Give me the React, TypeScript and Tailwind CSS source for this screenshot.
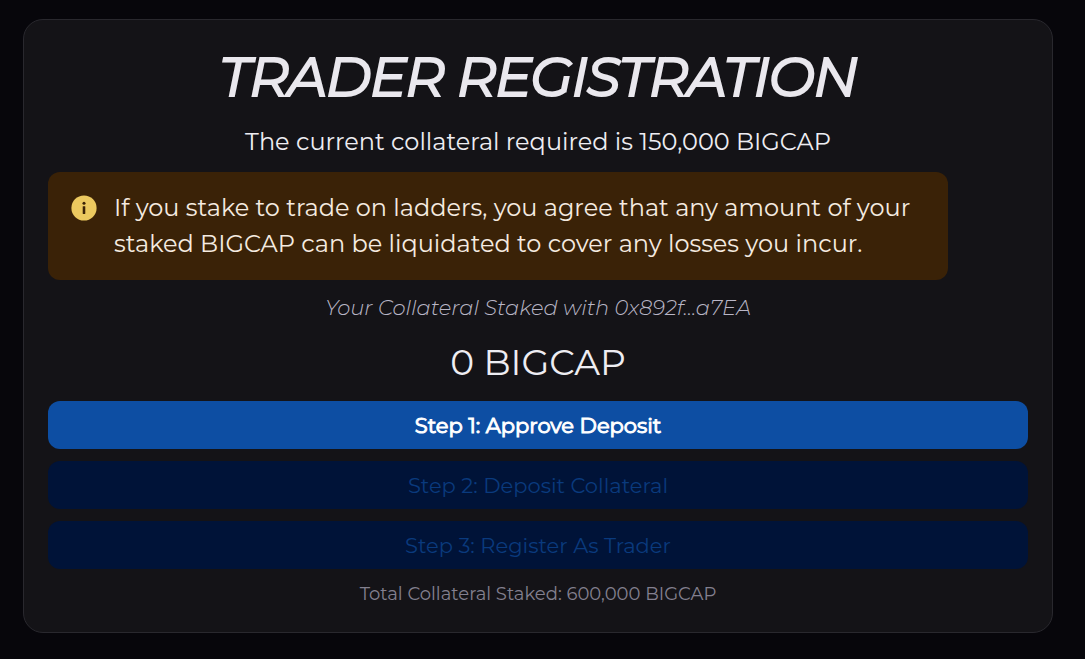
interface Step {
  label: string;
  enabled: boolean;
}

const steps: Step[] = [
  { label: "Step 1: Approve Deposit", enabled: true },
  { label: "Step 2: Deposit Collateral", enabled: false },
  { label: "Step 3: Register As Trader", enabled: false },
];

function InfoIcon() {
  return (
    <svg
      viewBox="0 0 24 24"
      className="mt-1 h-7 w-7 shrink-0"
      fill="#ecc95f"
      aria-hidden="true"
    >
      <circle cx="12" cy="12" r="10.8" />
      <circle cx="12" cy="7.9" r="1.3" fill="#3a2207" />
      <rect x="10.9" y="10.5" width="2.2" height="6.6" rx="0.3" fill="#3a2207" />
    </svg>
  );
}

export default function App() {
  return (
    <main className="min-h-screen bg-[#07060b] pt-[19px] pr-8 pb-6 pl-[23px] font-['Montserrat','Inter',sans-serif] text-[#eeedf2]">
      <section className="flex flex-col gap-3 rounded-[20px] border border-[#29282e] bg-[#141317] p-6 text-center">
        <h1 className="pb-0.5 text-[55px] leading-[66px] font-normal italic tracking-tight text-[#eae8ee] [-webkit-text-stroke:2px_currentColor]">
          TRADER REGISTRATION
        </h1>
        <p className="text-2xl leading-9">
          The current collateral required is 150,000 BIGCAP
        </p>

        <div
          role="alert"
          className="flex max-w-[900px] gap-4 rounded-xl bg-[#3a2207] py-[18px] pr-5 pl-[22px] text-left"
        >
          <InfoIcon />
          <p className="text-2xl leading-9 text-[#f5ebe0]">
            If you stake to trade on ladders, you agree that any amount of your
            staked BIGCAP can be liquidated to cover any losses you incur.
          </p>
        </div>

        <p className="text-[21px] leading-8 font-light italic text-[#b9b6c6]">
          Your Collateral Staked with 0x892f...a7EA
        </p>
        <p className="text-4xl leading-[53px]">0 BIGCAP</p>

        {steps.map((step) => (
          <button
            key={step.label}
            type="button"
            disabled={!step.enabled}
            className={`h-12 w-full rounded-xl pt-0.5 text-[21px] leading-8 ${
              step.enabled
                ? "bg-[#0d4ea3] text-white [-webkit-text-stroke:1px_currentColor]"
                : "bg-[#001338] text-[#0a3a7d]"
            }`}
          >
            {step.label}
          </button>
        ))}

        <p className="text-lg leading-[27px] text-[#83808f]">
          Total Collateral Staked: 600,000 BIGCAP
        </p>
      </section>
    </main>
  );
}
